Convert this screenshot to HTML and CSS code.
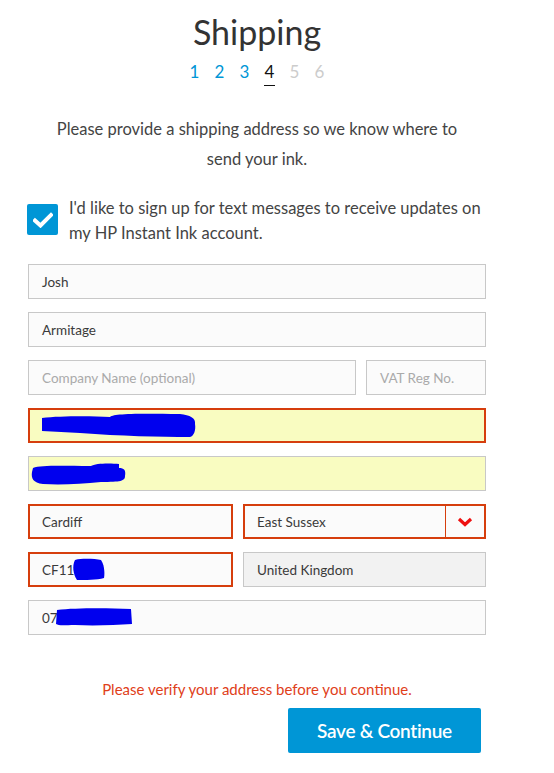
FILE: index.html
```html
<!DOCTYPE html>
<html>
<head>
<meta charset="utf-8">
<link rel="stylesheet" href="styles.css">
</head>
<body>
<div class="page">
  <h1 class="title">Shipping</h1>
  <div class="steps">
    <span class="step done">1</span>
    <span class="step done">2</span>
    <span class="step done">3</span>
    <span class="step current">4</span>
    <span class="step todo">5</span>
    <span class="step todo">6</span>
  </div>
  <p class="intro">Please provide a shipping address so we know where to<br>send your ink.</p>
  <div class="optin">
    <span class="checkbox">
      <svg width="20" height="16" viewBox="0 0 20 16"><path d="M2 8.5 L7.5 13.5 L18 3" fill="none" stroke="#fff" stroke-width="4" stroke-linecap="square"/></svg>
    </span>
    <span class="optin-text">I'd like to sign up for text messages to receive updates on my HP Instant Ink account.</span>
  </div>
  <div class="form">
    <div class="field">Josh</div>
    <div class="field">Armitage</div>
    <div class="row">
      <div class="field placeholder grow">Company Name (optional)</div>
      <div class="field placeholder vat">VAT Reg No.</div>
    </div>
    <div class="field error autofill">
      <svg class="blot" width="156" height="28" viewBox="0 0 156 28"><path d="M2 6 C20 4 50 4 70 5 C72 2 90 1 140 2 C150 3 156 6 155 12 C156 18 154 24 150 25 C120 25 80 24 40 21 L2 19 Z" fill="#0000ee"/></svg>
    </div>
    <div class="field autofill pad-s">
      <svg class="blot" width="95" height="24" viewBox="0 0 95 24"><path d="M2 6 C10 3 30 4 60 4 C64 1 80 1 88 2 L88 6 C93 6 95 8 94 14 C94 19 90 20 70 20 C50 22 30 23 12 22 C2 21 0 16 1 10 Z" fill="#0000ee"/></svg>
    </div>
    <div class="row">
      <div class="field error left">Cardiff</div>
      <div class="field error grow select">
        <span class="select-val">East Sussex</span>
        <span class="select-btn"><svg width="16" height="10" viewBox="0 0 16 10"><path d="M2 2 L8 7.5 L14 2" fill="none" stroke="#ee1111" stroke-width="3.2"/></svg></span>
      </div>
    </div>
    <div class="row">
      <div class="field error left">CF11<svg class="blot-in" width="34" height="24" viewBox="0 0 34 24"><path d="M4 2 C12 0 24 1 30 2 C33 6 34 14 33 20 C26 22 14 22 6 22 C2 16 1 8 4 2 Z" fill="#0000ee"/></svg></div>
      <div class="field grow readonly">United Kingdom</div>
    </div>
    <div class="field">07<svg class="blot-in" width="78" height="22" viewBox="0 0 78 22"><path d="M2 3 C20 1 50 1 76 2 L77 17 C60 18 40 19 20 18 C10 18 4 19 1 17 Z" fill="#0000ee"/></svg></div>
  </div>
  <p class="warn">Please verify your address before you continue.</p>
  <div class="actions">
    <button class="btn">Save &amp; Continue</button>
  </div>
</div>
</body>
</html>
```
FILE: styles.css
```css
html, body { margin: 0; padding: 0; background: #fff; }
body { font-family: Lato, "Open Sans", sans-serif; color: #3a3a3a; }
.page { width: 458px; margin-left: 28px; display: flex; flex-direction: column; }
.title { margin: 12px 0 0; font-size: 34px; font-weight: 400; text-align: center; line-height: 40px; color: #333; }
.steps { display: flex; justify-content: center; gap: 14px; margin-top: 9px; font-size: 17px; line-height: 22px; }
.step { display: inline-block; width: 11px; text-align: center; }
.step.done { color: #0096d6; }
.step.current { color: #111; border-bottom: 1px solid #111; padding-bottom: 2px; }
.step.todo { color: #ccc; }
.intro { margin: 28px 0 0; text-align: center; font-size: 16.5px; line-height: 30px; color: #444; }
.optin { display: flex; gap: 11px; margin-top: 22px; margin-left: -1px; margin-right: -10px; }
.checkbox { flex: none; width: 31px; height: 31px; background: #0096d6; border-radius: 2px; display: flex; align-items: center; justify-content: center; margin-top: 8px; }
.optin-text { font-size: 16.5px; line-height: 25px; color: #444; }
.form { display: flex; flex-direction: column; gap: 13px; margin-top: 18px; }
.row { display: flex; gap: 10px; }
.field { box-sizing: border-box; height: 35px; border: 1px solid #c8c8c8; background: #fbfbfb; padding: 0 13px; display: flex; align-items: center; font-size: 13.5px; color: #3a3a3a; }
.field.placeholder { color: #aaa; }
.grow { flex: 1; }
.vat { width: 120px; flex: none; }
.left { width: 205px; flex: none; }
.field.error { border: 2px solid #d63e0d; padding-left: 12px; }
.autofill { background: #f9fcc1; }
.pad-s { padding-left: 4px; }
.blot { display: block; margin-left: -2px; }
.blot-in { display: block; margin-left: -3px; }
.select { padding-right: 0; }
.select-val { flex: 1; }
.select-btn { width: 38px; height: 100%; border-left: 1px solid #d63e0d; display: flex; align-items: center; justify-content: center; }
.readonly { background: #f2f2f2; }
.warn { margin: 44px 0 0; text-align: center; color: #e0401a; font-size: 15px; line-height: 20px; }
.actions { display: flex; justify-content: flex-end; margin-top: 9px; padding-right: 5px; }
.btn { width: 193px; height: 45px; border: 0; border-radius: 2px; background: #0096d6; color: #fff; font-family: inherit; font-size: 19px; font-weight: 600; letter-spacing: -0.3px; }
```
